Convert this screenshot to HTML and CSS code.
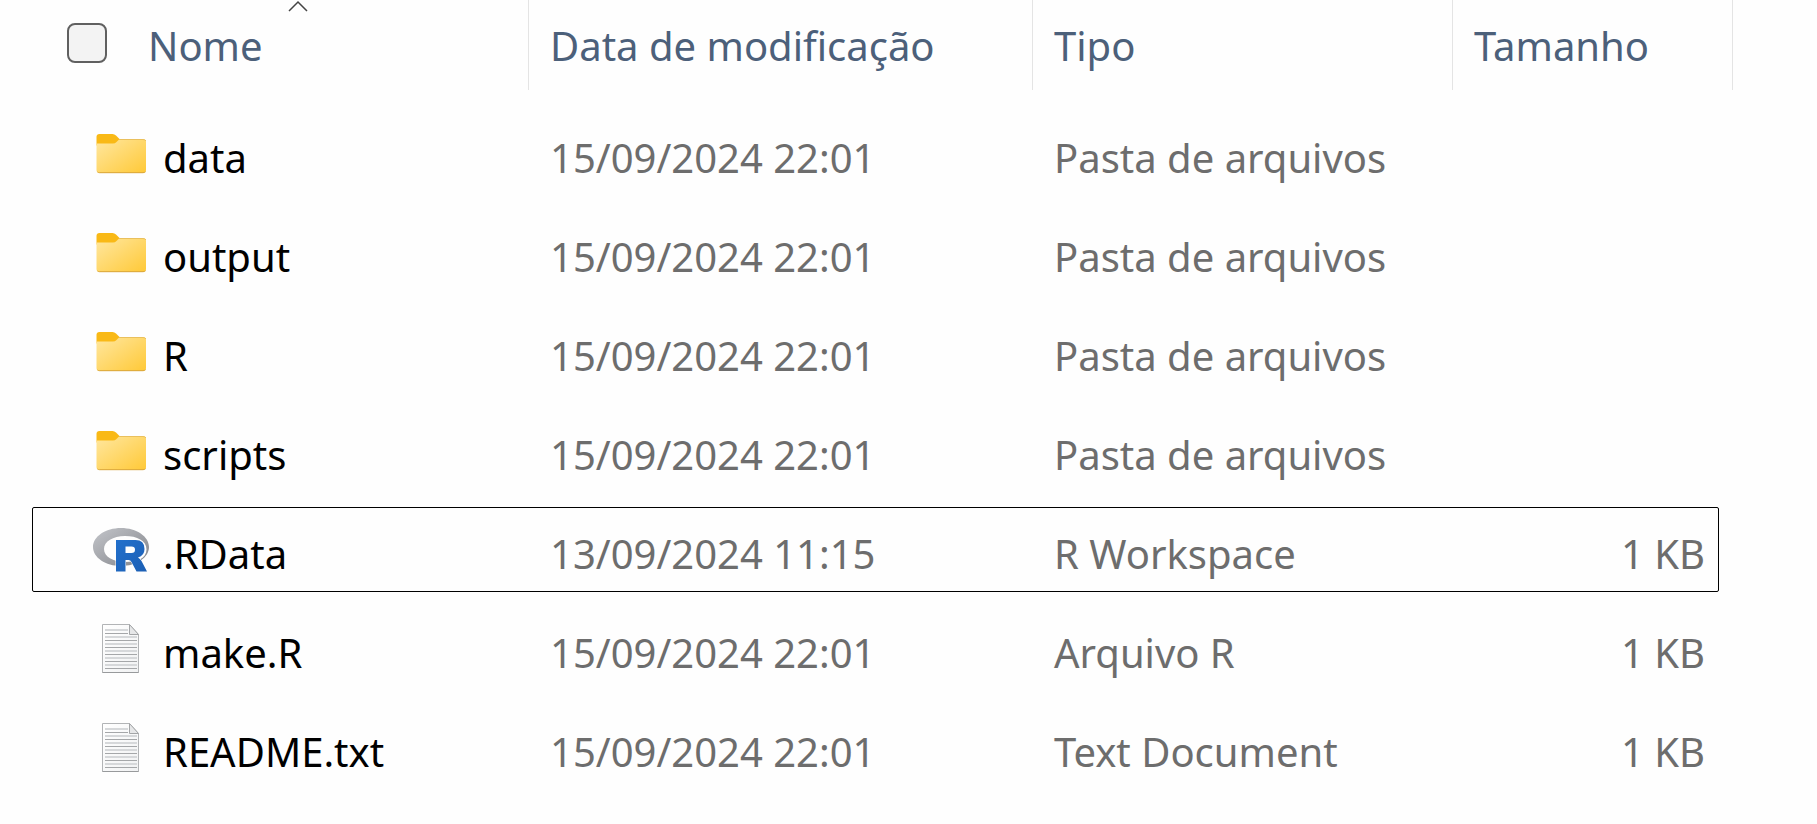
FILE: index.html
```html
<!DOCTYPE html>
<html lang="pt-BR">
<head>
<meta charset="utf-8">
<title>Arquivos</title>
<link rel="stylesheet" href="styles.css">
</head>
<body>
<svg class="defs" aria-hidden="true">
  <defs>
    <linearGradient id="folder-front" x1="0" y1="0" x2="1" y2="1">
      <stop offset="0" stop-color="#ffe7a0"/>
      <stop offset="1" stop-color="#ffc937"/>
    </linearGradient>
    <linearGradient id="ring" x1="0" y1="0" x2="1" y2="1">
      <stop offset="0" stop-color="#c3c5ca"/>
      <stop offset="1" stop-color="#828489"/>
    </linearGradient>
    <linearGradient id="blue" x1="0" y1="0" x2="1" y2="1">
      <stop offset="0" stop-color="#2270cc"/>
      <stop offset="1" stop-color="#1c5fb4"/>
    </linearGradient>
    <linearGradient id="paper" x1="0" y1="0" x2="1" y2="1">
      <stop offset="0" stop-color="#ffffff"/>
      <stop offset="1" stop-color="#f1f2f3"/>
    </linearGradient>
    <symbol id="folder" viewBox="0 0 56 50">
      <path d="M3.500 8q0-3 3-3h13q2 0 3.500 1.500l4 4-4 6H3.500z" fill="#f9b916"/>
      <path d="M3.500 14.500h16.500q2 0 3.500-1.500l2-2q1-1 3-1H50q3 0 3 3V41q0 3-3 3H6.500q-3 0-3-3z" fill="url(#folder-front)"/>
      <path d="M26 10.500h24q2 0 3 1.500" fill="none" stroke="#eac05c"/>
      <path d="M4.500 43q1 .700 2 .700h43.500q1.500 0 2.500-1" fill="none" stroke="#d9a63c"/>
    </symbol>
    <symbol id="rdata" viewBox="0 0 56 50">
      <path fill="url(#ring)" fill-rule="evenodd" d="M28 3C12.500 3 0 11.500 0 22s12.500 19 28 19 28-8.500 28-19S43.500 3 28 3zM32 11c12 0 21.500 4.500 21.500 13.500S44 37 32 37s-21-5.500-21-13S20 11 32 11z"/>
      <path fill="url(#blue)" stroke="#fefefe" stroke-width="1" paint-order="stroke" fill-rule="evenodd" d="M23 15H42.500Q51.500 15 51.500 24Q51.500 30.500 45 32.500Q47 33.500 48.500 36L54 46.500H43.500L38.500 37Q37.500 35 35.500 35H32.500V46.500H23zM32.500 21.500V28H38.500Q42 28 42 24.800Q42 21.500 38.500 21.500z"/>
    </symbol>
    <symbol id="text-file" viewBox="0 0 56 50">
      <path d="M9.500.500H36.500L45.500 10.500V48.500H9.500z" fill="url(#paper)" stroke="#b2b4b6"/>
      <path d="M9.500 48.500h36" stroke="#989a9c"/>
      <path d="M36.500.500V10.500H45.500z" fill="#e6e7e8" stroke="#a3a5a7"/>
      <path d="M12 6h23M12 13h32M12 20h32M12 27h32M12 34h32M12 41h32" stroke="#d6d8da" stroke-width="2"/>
      <path d="M12 9.500h23M12 16.500h32M12 23.500h32M12 30.500h32M12 37.500h32M12 44.500h32" stroke="#a5a7a9"/>
    </symbol>
  </defs>
</svg>
<main>
<table class="files">
  <colgroup>
    <col>
    <col class="col-date">
    <col class="col-type">
    <col class="col-size">
  </colgroup>
  <thead>
    <tr>
      <th scope="col" aria-sort="ascending">
        <div class="head head-name">
          <input class="select-all" type="checkbox" aria-label="Selecionar tudo">
          <button type="button">Nome</button>
          <svg class="sort" viewBox="0 0 20 12" aria-hidden="true"><path d="M1 11 10 2l9 9"/></svg>
        </div>
      </th>
      <th scope="col"><div class="head"><button type="button">Data de modificação</button></div></th>
      <th scope="col"><div class="head"><button type="button">Tipo</button></div></th>
      <th scope="col"><div class="head"><button type="button">Tamanho</button></div></th>
    </tr>
  </thead>
  <tbody>
    <tr>
      <td class="name"><div class="file"><svg class="icon" aria-hidden="true"><use href="#folder"/></svg><span>data</span></div></td>
      <td>15/09/2024 22:01</td><td>Pasta de arquivos</td><td class="size"></td>
    </tr>
    <tr>
      <td class="name"><div class="file"><svg class="icon" aria-hidden="true"><use href="#folder"/></svg><span>output</span></div></td>
      <td>15/09/2024 22:01</td><td>Pasta de arquivos</td><td class="size"></td>
    </tr>
    <tr>
      <td class="name"><div class="file"><svg class="icon" aria-hidden="true"><use href="#folder"/></svg><span>R</span></div></td>
      <td>15/09/2024 22:01</td><td>Pasta de arquivos</td><td class="size"></td>
    </tr>
    <tr>
      <td class="name"><div class="file"><svg class="icon" aria-hidden="true"><use href="#folder"/></svg><span>scripts</span></div></td>
      <td>15/09/2024 22:01</td><td>Pasta de arquivos</td><td class="size"></td>
    </tr>
    <tr class="focused">
      <td class="name"><div class="file"><svg class="icon" aria-hidden="true"><use href="#rdata"/></svg><span>.RData</span></div></td>
      <td>13/09/2024 11:15</td><td>R Workspace</td><td class="size">1 KB</td>
    </tr>
    <tr>
      <td class="name"><div class="file"><svg class="icon" aria-hidden="true"><use href="#text-file"/></svg><span>make.R</span></div></td>
      <td>15/09/2024 22:01</td><td>Arquivo R</td><td class="size">1 KB</td>
    </tr>
    <tr>
      <td class="name"><div class="file"><svg class="icon" aria-hidden="true"><use href="#text-file"/></svg><span>README.txt</span></div></td>
      <td>15/09/2024 22:01</td><td>Text Document</td><td class="size">1 KB</td>
    </tr>
  </tbody>
</table>
</main>
</body>
</html>
```
FILE: styles.css
```css
* { box-sizing: border-box; }

body {
  margin: 0;
  background: #fefefe;
  color: #6d6d6d;
  font: 40px/56px "Noto Sans", "Open Sans", sans-serif;
}

.defs {
  position: absolute;
  width: 0;
  height: 0;
}

main { padding: 0 84px 0 32px; }

.files {
  width: 100%;
  table-layout: fixed;
  border-collapse: collapse;
}

.col-date { width: 504px; }
.col-type { width: 420px; }
.col-size { width: 280px; }

th {
  padding: 0 0 14px;
  font-weight: 400;
  text-align: left;
}

.head {
  position: relative;
  display: flex;
  align-items: center;
  height: 90px;
  padding: 2px 0 0 21px;
  border-right: 1px solid #e4e4e4;
}

.head-name {
  gap: 41px;
  padding-left: 35px;
}

.head button {
  padding: 0;
  border: 0;
  background: none;
  color: #4c607a;
  font: inherit;
}

.select-all {
  appearance: none;
  width: 40px;
  height: 40px;
  margin: 0 0 6px;
  border: 2px solid #606060;
  border-radius: 8px;
  background: #f3f3f3;
}

.sort {
  position: absolute;
  top: 0;
  left: 256px;
  width: 20px;
  height: 12px;
  fill: none;
  stroke: #444;
  stroke-width: 1.5;
}

td {
  height: 99px;
  padding: 9px 0 0 21px;
  white-space: nowrap;
}

.name {
  padding-left: 61px;
  color: #000;
}

.file {
  display: flex;
  align-items: center;
  gap: 14px;
}

.icon {
  flex: none;
  width: 56px;
  height: 50px;
  margin-bottom: 8px;
}

.size {
  padding-right: 28px;
  text-align: right;
}

.focused { position: relative; }

/* Focus frame spans the whole row, anchored to the row itself */
.focused .name::after {
  content: "";
  position: absolute;
  inset: 7px 14px 7px 0;
  border: 1px solid #000;
  border-radius: 2px;
}
```
